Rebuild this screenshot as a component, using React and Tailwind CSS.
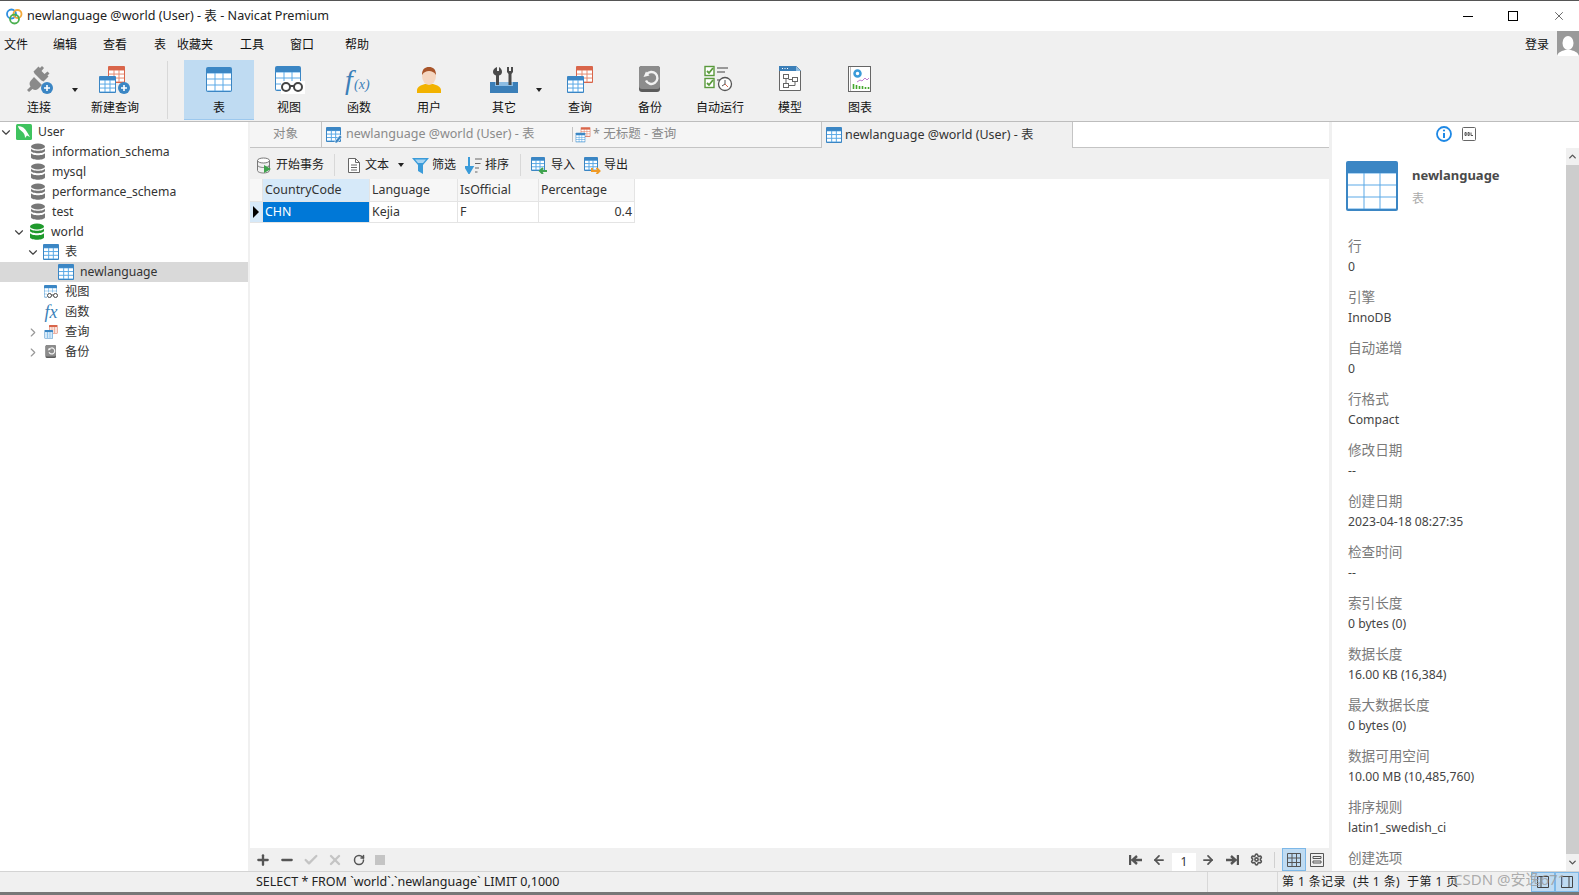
import { ArrowLeft, ArrowRight, Check, ChevronDown, ChevronRight, ChevronUp, Plus, RotateCw, Settings, Minus, X } from 'lucide-react'

const MENU = [
  { label: '文件', cls: 'ml-[4px]' },
  { label: '编辑', cls: 'ml-[25px]' },
  { label: '查看', cls: 'ml-[26px]' },
  { label: '表', cls: 'ml-[27px]' },
  { label: '收藏夹', cls: 'ml-[11px]' },
  { label: '工具', cls: 'ml-[27px]' },
  { label: '窗口', cls: 'ml-[26px]' },
  { label: '帮助', cls: 'ml-[31px]' },
]

const PROPS = [
  ['行', '0'],
  ['引擎', 'InnoDB'],
  ['自动递增', '0'],
  ['行格式', 'Compact'],
  ['修改日期', '--'],
  ['创建日期', '2023-04-18 08:27:35'],
  ['检查时间', '--'],
  ['索引长度', '0 bytes (0)'],
  ['数据长度', '16.00 KB (16,384)'],
  ['最大数据长度', '0 bytes (0)'],
  ['数据可用空间', '10.00 MB (10,485,760)'],
  ['排序规则', 'latin1_swedish_ci'],
  ['创建选项', ''],
]

// table glyph used all over the app, drawn inside a parent svg
function Grid({ x = 0, y = 0, w = 16, h = 16, color = '#3b86c4', line = '#5aa9e6', head = 0.24, cols = 3, rows = 3 }) {
  const headH = h * head
  const pad = Math.max(1, w / 26)
  const cw = (w - pad * 2) / cols
  const ch = (h - headH - pad) / rows
  const cells = []
  for (let r = 0; r < rows; r++) {
    for (let c = 0; c < cols; c++) {
      cells.push(
        <rect key={`${r}-${c}`} x={x + pad + c * cw + (c ? 0.5 : 0)} y={y + headH + r * ch + 0.5} width={cw - (c ? 0.5 : 0) - (c < cols - 1 ? 0.5 : 0)} height={ch - 1} fill="#fff" />,
      )
    }
  }
  return (
    <g>
      <rect x={x} y={y} width={w} height={h} rx={w > 20 ? 2 : 1} fill={color} />
      <rect x={x + pad} y={y + headH} width={w - pad * 2} height={h - headH - pad} fill={line} />
      {cells}
    </g>
  )
}

function TableIcon({ size = 16 }) {
  return (
    <svg width={size} height={size} viewBox="0 0 16 16">
      <Grid w={16} h={16} />
    </svg>
  )
}

function QueryIcon({ size = 32 }) {
  return (
    <svg width={size} height={size} viewBox="0 0 32 32">
      <Grid x={12} y={2} w={17} h={17} color="#d9654a" line="#e58a70" />
      <Grid x={3} y={12} w={17} h={17} />
    </svg>
  )
}

function NewQueryIcon() {
  return (
    <svg width="32" height="32" viewBox="0 0 32 32">
      <Grid x={9} y={2} w={17} h={17} color="#d9654a" line="#e58a70" />
      <Grid x={0} y={12} w={17} h={17} />
      <circle cx="25" cy="24" r="6" fill="#3b86c4" />
      <path d="M25 21v6M22 24h6" stroke="#fff" strokeWidth="1.6" />
    </svg>
  )
}

function PlugIcon() {
  return (
    <svg width="32" height="32" viewBox="0 0 32 32">
      <path d="M17 4l2-2 2 2-2.500 3 3 3 3-2.500 2 2-2 2 1 1-5 5-2-1-7-7-1-2 5-5z" fill="#8a8a8a" />
      <path d="M11 13l8 8-4 4c-2 1.500-4 1-5.500 0L6 28l-2-2 3.500-3.500c-1-1.500-1.500-3.500 0-5.500z" fill="#8a8a8a" />
      <circle cx="24" cy="24" r="6" fill="#3b86c4" />
      <path d="M24 21v6M21 24h6" stroke="#fff" strokeWidth="1.6" />
    </svg>
  )
}

function ViewIcon({ size = 32 }) {
  return (
    <svg width={size} height={size} viewBox="0 0 32 32">
      <Grid x={2} y={2} w={26} h={25} />
      <rect x="8" y="17" width="24" height="13" fill="#fff" />
      <circle cx="13" cy="23" r="4" fill="#fff" stroke="#444" strokeWidth="2" />
      <circle cx="25" cy="23" r="4" fill="#fff" stroke="#444" strokeWidth="2" />
      <path d="M17 22h4" stroke="#444" strokeWidth="2" />
    </svg>
  )
}

function FuncIcon() {
  return (
    <svg width="32" height="32" viewBox="0 0 32 32">
      <text x="2" y="25" fontFamily="'Liberation Serif', serif" fontStyle="italic" fontSize="28" fill="#3b7fb8">f</text>
      <text x="11" y="25" fontFamily="'Liberation Serif', serif" fontStyle="italic" fontSize="14" fill="#3b7fb8">(x)</text>
    </svg>
  )
}

function UserIcon() {
  return (
    <svg width="32" height="32" viewBox="0 0 32 32">
      <path d="M4 29v-3c0-3 4-5 8-6h8c4 1 8 3 8 6v3z" fill="#f2b200" />
      <ellipse cx="16" cy="12" rx="7" ry="9" fill="#f5d6c0" />
      <path d="M9 11c0-6 3-8 7-8s7 2 7 8c-2-3-4-4-7-4s-5 1-7 4z" fill="#a8552a" />
    </svg>
  )
}

function ToolsIcon() {
  return (
    <svg width="32" height="32" viewBox="0 0 32 32">
      <path d="M2 18h28v11H2z" fill="#3b7fb8" />
      <path d="M7 18h18v4H7z" fill="#8dbde3" />
      <path d="M11 3v4H9V3C6 4 5 6 5 8c0 2 1.500 3 3 3.500V21h3v-9.500c2-.5 3-2 3-3.500 0-2-1-4-3-5z" fill="#4a4a4a" />
      <path d="M19 3v5l1.500 2V21h3V10L25 8V3l-2 0v4h-2V3z" fill="#4a4a4a" />
    </svg>
  )
}

function BackupIcon({ size = 32 }) {
  return (
    <svg width={size} height={size} viewBox="0 0 32 32">
      <rect x="5" y="2" width="21" height="26" rx="3" fill="#5c5c5c" />
      <rect x="5" y="2" width="21" height="23" rx="3" fill="#8c8c8c" />
      <path d="M12.500 10.500a6 6 0 1 1 -.5 6" fill="none" stroke="#f2f2f2" strokeWidth="2.400" />
      <path d="M9.500 13l6-1.500-3.500-4z" fill="#f2f2f2" />
    </svg>
  )
}

function AutoRunIcon() {
  return (
    <svg width="32" height="32" viewBox="0 0 32 32">
      <rect x="1" y="2.500" width="9" height="9" fill="#fff" stroke="#5a9a3c" strokeWidth="1.400" />
      <path d="M3 7l2 2 4-5" stroke="#5a9a3c" strokeWidth="1.800" fill="none" />
      <rect x="1" y="14.500" width="9" height="9" fill="#fff" stroke="#5a9a3c" strokeWidth="1.400" />
      <path d="M3 19l2 2 4-5" stroke="#5a9a3c" strokeWidth="1.800" fill="none" />
      <path d="M13 4h11M13 8h8M13 16h4" stroke="#999" strokeWidth="1.800" />
      <circle cx="21" cy="20" r="6.500" fill="#fff" stroke="#555" strokeWidth="1.300" />
      <path d="M21 16v4l-3 2" stroke="#555" fill="none" />
      <path d="M21 20l3 3" stroke="#d9654a" fill="none" />
    </svg>
  )
}

function ModelIcon() {
  return (
    <svg width="32" height="32" viewBox="0 0 32 32">
      <path d="M5.500 2.500h17l4 4v20h-21z" fill="#fff" stroke="#666" />
      <path d="M5 2h17l5 5H5z" fill="#3b7fb8" />
      <path d="M22 2l5 5h-5z" fill="#8dbde3" />
      <path d="M8 4.500h1M10.500 4.500h1M13 4.500h1" stroke="#fff" />
      <g fill="#fff" stroke="#666">
        <rect x="9.500" y="10.500" width="5" height="4" />
        <rect x="18.500" y="13.500" width="5" height="4" />
        <rect x="9.500" y="19.500" width="5" height="4" />
      </g>
      <path d="M12 14.500v5M14.500 15.500h4M14.500 21.500h6.500v-4" stroke="#666" fill="none" />
    </svg>
  )
}

function ChartIcon() {
  return (
    <svg width="32" height="32" viewBox="0 0 32 32">
      <rect x="4.500" y="2.500" width="22" height="25" fill="#fff" stroke="#666" />
      <path d="M6.500 3v24" stroke="#bbb" />
      <circle cx="13.500" cy="9.500" r="3" fill="none" stroke="#3a9bd9" strokeWidth="2.500" />
      <path d="M13 18l3-2 2 1 3-3 2 2 2-2" stroke="#c07ad0" fill="none" />
      <path d="M9.500 25v-5M12.500 25v-4M15.500 25v-3M18.500 25v-3M21.500 25v-2M24.500 25v-2" stroke="#46a82f" strokeWidth="1.600" />
    </svg>
  )
}

function Caret() {
  return <span className="w-0 h-0 border-x-[3.5px] border-x-transparent border-t-[4px] border-t-[#222]" />
}

function ToolButton({ label, icon, active, className }) {
  return (
    <div className={`relative flex h-[60px] w-[70px] shrink-0 flex-col items-center ${active ? 'border-b border-[#9cc8ee] bg-[#bfdbf2]' : ''} ${className || ''}`}>
      <div className="mt-[4px] flex h-[32px] items-center justify-center">{icon}</div>
      <span className="mt-[4px] text-[12px] leading-[16px] text-[#111]">{label}</span>
    </div>
  )
}

function DbIcon({ color = '#777', size = 16 }) {
  return (
    <svg width={size} height={size + 2} viewBox="0 0 16 18">
      <ellipse cx="8" cy="3.500" rx="7" ry="3" fill={color} />
      <path d="M1 5.500c1 3 13 3 14 0v2.500c-1 3-13 3-14 0z" fill={color} />
      <path d="M1 10c1 3 13 3 14 0v4.500c-1 3-13 3-14 0z" fill={color} />
    </svg>
  )
}

function DolphinIcon() {
  return (
    <svg width="16" height="16" viewBox="0 0 16 16">
      <rect width="16" height="16" rx="1.500" fill="#3fc35f" />
      <path d="M2 2c4 0 7 2 9 6l3 5-3-1.500L9 14c0-3-1-5-3-6.500C4 6 2.500 4.500 2 2z" fill="#fff" />
    </svg>
  )
}

function TreeRow({ depth, open, icon, label, selected }) {
  return (
    <div className={`flex h-[20px] items-center ${selected ? 'bg-[#d9d9d9]' : ''}`}>
      <div className={`flex w-[14px] shrink-0 justify-center ${depth}`}>
        {open === true && <ChevronDown size={15} strokeWidth={2} className="text-[#444]" />}
        {open === false && <ChevronRight size={15} strokeWidth={2} className="text-[#999]" />}
      </div>
      <div className="ml-[3px] flex w-[16px] shrink-0 items-center justify-center">{icon}</div>
      <span className="ml-[6px] text-[12.2px] text-[#333]">{label}</span>
    </div>
  )
}

function Sidebar() {
  return (
    <div className="h-full w-[248px] shrink-0 overflow-hidden bg-white">
      <TreeRow depth="ml-[-1px]" open icon={<DolphinIcon />} label="User" />
      {['information_schema', 'mysql', 'performance_schema', 'test'].map((name) => (
        <TreeRow key={name} depth="ml-[13px]" icon={<DbIcon />} label={name} />
      ))}
      <TreeRow depth="ml-[12px]" open icon={<DbIcon color="#1f9a2c" />} label="world" />
      <TreeRow depth="ml-[26px]" open icon={<TableIcon />} label="表" />
      <TreeRow depth="ml-[41px]" icon={<TableIcon />} label="newlanguage" selected />
      <TreeRow depth="ml-[26px]" icon={<ViewIcon size={18} />} label="视图" />
      <TreeRow depth="ml-[26px]" icon={<span className="font-['Liberation_Serif'] text-[18px] italic leading-none text-[#3b7fb8]">fx</span>} label="函数" />
      <TreeRow depth="ml-[26px]" open={false} icon={<QueryIcon size={18} />} label="查询" />
      <TreeRow depth="ml-[26px]" open={false} icon={<BackupIcon size={18} />} label="备份" />
    </div>
  )
}

function Tabs() {
  return (
    <div className="flex h-[26px] shrink-0 text-[12.5px] text-[#8a8a8a]">
      <div className="flex w-[72px] items-center justify-center border-b border-r border-[#c4c4c4] bg-[#f5f5f5]">对象</div>
      <div className="flex w-[250px] items-center gap-[4px] border-b border-[#c4c4c4] bg-[#f5f5f5] pl-[4px]">
        <svg width="16" height="16" viewBox="0 0 16 16">
          <Grid w={15} h={15} />
          <path d="M9 14l5-6 2 2-5 6H9z" fill="#3b86c4" stroke="#fff" strokeWidth="0.6" />
        </svg>
        <span>newlanguage @world (User) - 表</span>
      </div>
      <div className="flex w-[250px] items-center gap-[1px] border-b border-r border-[#c4c4c4] bg-[#f5f5f5]">
        <div className="h-[15px] w-px bg-[#c4c4c4]" />
        <QueryIcon size={18} />
        <span>* 无标题 - 查询</span>
      </div>
      <div className="flex w-[250px] items-center gap-[3px] bg-[#f0f0f0] pl-[4px] text-[#333]">
        <TableIcon />
        <span>newlanguage @world (User) - 表</span>
      </div>
      <div className="flex-1 border-b border-l border-[#c4c4c4] bg-white" />
    </div>
  )
}

function GridToolbar() {
  const Item = ({ icon, label, className }) => (
    <div className={`flex items-center gap-[3px] text-[12px] text-[#222] ${className || ''}`}>
      {icon}
      <span>{label}</span>
    </div>
  )
  const Sep = () => <div className="h-[22px] w-px bg-[#d8d8d8]" />
  return (
    <div className="flex h-[31px] shrink-0 items-center bg-[#f0f0f0] pl-[6px] pt-[3px]">
      <Item
        label="开始事务"
        icon={
          <svg width="17" height="17" viewBox="0 0 17 17">
            <ellipse cx="7.500" cy="3.500" rx="6" ry="2.500" fill="#fff" stroke="#777" />
            <path d="M1.500 3.500v10c0 1.500 3 2.500 6 2.500s6-1 6-2.500v-10M1.500 8c0 1.500 3 2.500 6 2.500s6-1 6-2.500" fill="none" stroke="#777" />
            <path d="M8 8l7 4-7 4z" fill="#3fa34d" />
          </svg>
        }
      />
      <div className="ml-[10px] mr-[11px]"><Sep /></div>
      <Item
        label="文本"
        icon={
          <svg width="16" height="17" viewBox="0 0 16 17">
            <path d="M2.500 1.500h7l4 4v10h-11z" fill="#fff" stroke="#666" />
            <path d="M9.500 1.500v4h4M5 8h6M5 10.500h6M5 13h6" fill="none" stroke="#666" />
          </svg>
        }
      />
      <div className="ml-[9px] mr-[8px] flex"><Caret /></div>
      <Item
        label="筛选"
        icon={
          <svg width="17" height="17" viewBox="0 0 17 17">
            <path d="M0 1h17l-6 7v9l-5-3V8z" fill="#3a9bd9" />
            <path d="M3 2.500h11L11 6H6z" fill="#a6d4f2" />
          </svg>
        }
      />
      <Item
        className="ml-[9px]"
        label="排序"
        icon={
          <svg width="17" height="17" viewBox="0 0 17 17">
            <path d="M4 0v13M0.500 10L4 16l3.500-6z" stroke="#3a9bd9" strokeWidth="2" fill="#3a9bd9" />
            <path d="M10 2h7M10 6.500h5.500M10 11h4M10 15h2.500" stroke="#666" />
          </svg>
        }
      />
      <div className="ml-[11px] mr-[10px]"><Sep /></div>
      <Item
        label="导入"
        icon={
          <svg width="17" height="17" viewBox="0 0 17 17">
            <Grid w={14} h={14} />
            <path d="M16 14h-7M12 11l-3 3 3 3" stroke="#3fa34d" strokeWidth="2" fill="none" />
          </svg>
        }
      />
      <Item
        className="ml-[9px]"
        label="导出"
        icon={
          <svg width="17" height="17" viewBox="0 0 17 17">
            <Grid w={14} h={14} />
            <path d="M8 11v3h7M12.500 11l3 3-3 3" stroke="#ef9a26" strokeWidth="2" fill="none" />
          </svg>
        }
      />
    </div>
  )
}

function DataGrid() {
  const Head = ({ w, children, active }) => (
    <div className={`flex h-[23px] items-center border-b border-r border-[#e4e4e4] pl-[2px] ${w} ${active ? 'bg-[#d6e9f9]' : 'bg-[#f7f7f7]'}`}>{children}</div>
  )
  const Cell = ({ w, children, className }) => (
    <div className={`flex h-[21px] items-center border-b border-r border-[#e4e4e4] px-[2px] ${w} ${className || ''}`}>{children}</div>
  )
  return (
    <div className="flex-1 bg-white text-[12.4px] text-[#333]">
      <div className="flex">
        <Head w="w-[13px]" />
        <Head w="w-[107px]" active>CountryCode</Head>
        <Head w="w-[88px]">Language</Head>
        <Head w="w-[81px]">IsOfficial</Head>
        <Head w="w-[96px]">Percentage</Head>
      </div>
      <div className="flex">
        <div className="flex h-[21px] w-[13px] items-center justify-center border-b border-r border-[#e4e4e4] bg-[#d6e9f9]">
          <span className="h-0 w-0 border-y-[6px] border-l-[6px] border-y-transparent border-l-black" />
        </div>
        <Cell w="w-[107px]" className="bg-[#0078d7] text-white">CHN</Cell>
        <Cell w="w-[88px]">Kejia</Cell>
        <Cell w="w-[81px]">F</Cell>
        <Cell w="w-[96px]" className="justify-end">0.4</Cell>
      </div>
    </div>
  )
}

function GridFooter() {
  return (
    <div className="flex h-[23px] shrink-0 items-center bg-[#f0f0f0] pl-[5px]">
      <Plus size={16} strokeWidth={3.500} className="mr-[8px] text-[#555]" />
      <Minus size={16} strokeWidth={3.500} className="mr-[8px] text-[#555]" />
      <Check size={16} strokeWidth={3.500} className="mr-[8px] text-[#c4c4c4]" />
      <X size={16} strokeWidth={3.500} className="mr-[8px] text-[#c4c4c4]" />
      <RotateCw size={12} strokeWidth={3} className="ml-[2px] mr-[10px] text-[#555]" />
      <div className="h-[10px] w-[10px] bg-[#c4c4c4]" />
      <div className="flex-1" />
      <svg width="14" height="12" viewBox="0 0 14 12" className="mr-[9px]">
        <path d="M1 1v10M13 6H4M8 2L3.500 6 8 10" stroke="#555" strokeWidth="2.400" fill="none" />
      </svg>
      <ArrowLeft size={14} strokeWidth={3} className="mr-[6px] text-[#555]" />
      <div className="flex h-[18px] w-[24px] items-center justify-center self-end bg-white text-[12px] text-[#333]">1</div>
      <ArrowRight size={14} strokeWidth={3} className="ml-[5px] mr-[10px] text-[#555]" />
      <svg width="14" height="12" viewBox="0 0 14 12" className="mr-[11px]">
        <path d="M13 1v10M1 6h9M6 2l4.500 4L6 10" stroke="#555" strokeWidth="2.400" fill="none" />
      </svg>
      <Settings size={13} strokeWidth={3} className="mr-[11px] text-[#555]" />
      <div className="mr-[7px] h-[16px] w-px bg-[#d0d0d0]" />
      <div className="mr-[4px] flex h-[23px] w-[24px] items-center justify-center border border-[#7db8e8] bg-[#bfdbf2]">
        <svg width="14" height="14" viewBox="0 0 14 14">
          <path d="M.5.500h13v13H.500zM.5 5h13M.5 9.500h13M5 .500v13M9.500.500v13" fill="none" stroke="#555" />
        </svg>
      </div>
      <svg width="14" height="14" viewBox="0 0 14 14" className="mr-[5px]">
        <path d="M.5.500h13v13H.500z" fill="none" stroke="#555" />
        <path d="M3 3.500h8v2H3zM3 8h8v2H3z" fill="none" stroke="#555" />
      </svg>
    </div>
  )
}

function InfoPanel() {
  return (
    <div className="flex h-full w-[247px] shrink-0 flex-col bg-white">
      <div className="flex h-[26px] shrink-0 items-center justify-center gap-[10px] pb-[2px]">
        <svg width="16" height="16" viewBox="0 0 16 16">
          <circle cx="8" cy="8" r="7" fill="#fff" stroke="#1e88e5" strokeWidth="1.800" />
          <path d="M8 7v5" stroke="#1e88e5" strokeWidth="2" />
          <circle cx="8" cy="4.500" r="1.100" fill="#1e88e5" />
        </svg>
        <svg width="14" height="14" viewBox="0 0 14 14">
          <rect x=".5" y=".5" width="13" height="13" rx="1" fill="#fff" stroke="#666" />
          <path d="M3 5.500v3h1.200v-3zM6 5.500v3h1.200v-3zM9 5.500v3h2" fill="none" stroke="#555" />
        </svg>
      </div>
      <div className="flex min-h-0 flex-1">
        <div className="min-w-0 flex-1 overflow-hidden pl-[14px]">
          <div className="flex">
            <svg width="52" height="50" viewBox="0 0 52 50" className="mt-[13px]">
              <Grid w={52} h={50} />
            </svg>
            <div className="ml-[14px] mt-[18px]">
              <div className="text-[13px] font-bold leading-[18px] text-[#4a4a4a]">newlanguage</div>
              <div className="mt-[6px] text-[12px] leading-[18px] text-[#aaa]">表</div>
            </div>
          </div>
          <div className="mt-[25px] pl-[2px]">
            {PROPS.map(([k, v]) => (
              <div key={k} className="h-[51px]">
                <div className="h-[20px] text-[13.6px] leading-[20px] text-[#7a7a7a]">{k}</div>
                <div className="mt-px h-[20px] text-[12.2px] leading-[20px] text-[#444]">{v}</div>
              </div>
            ))}
          </div>
        </div>
        <div className="flex w-[13px] shrink-0 flex-col bg-[#cdcdcd]">
          <div className="flex h-[17px] items-center justify-center bg-[#f0f0f0]">
            <ChevronUp size={11} strokeWidth={3} className="text-[#555]" />
          </div>
          <div className="flex-1" />
          <div className="flex h-[17px] items-center justify-center bg-[#f0f0f0]">
            <ChevronDown size={11} strokeWidth={3} className="text-[#555]" />
          </div>
        </div>
      </div>
    </div>
  )
}

export default function App() {
  return (
    <div className="relative flex h-[895px] w-[1579px] flex-col overflow-hidden bg-[#f0f0f0] font-['Noto_Sans','Noto_Sans_CJK_SC',sans-serif]">
      <div className="h-px shrink-0 bg-[#555]" />

      {/* title bar */}
      <div className="flex h-[30px] shrink-0 items-center bg-white pl-[6px]">
        <svg width="17" height="17" viewBox="0 0 17 17">
          <circle cx="5.500" cy="6" r="4.500" fill="none" stroke="#2f8fe0" strokeWidth="1.800" />
          <circle cx="11.500" cy="6" r="4" fill="none" stroke="#f2a93b" strokeWidth="1.800" />
          <circle cx="8.500" cy="11" r="4.500" fill="none" stroke="#4cb050" strokeWidth="1.800" />
        </svg>
        <span className="ml-[4px] text-[12.6px] text-[#222]">newlanguage @world (User) - 表 - Navicat Premium</span>
        <div className="flex-1" />
        <div className="mr-[35px] h-px w-[10px] bg-black" />
        <div className="mr-[34px] h-[10px] w-[10px] border border-black" />
        <X size={14} strokeWidth={1} className="mr-[13px] text-black" />
      </div>

      {/* menu */}
      <div className="flex h-[29px] shrink-0 items-center pb-[2px] text-[12px] text-[#111]">
        {MENU.map((m) => (
          <span key={m.label} className={m.cls}>{m.label}</span>
        ))}
        <div className="flex-1" />
        <span className="mr-[8px]">登录</span>
        <div className="flex h-[25px] w-[22px] items-end justify-center self-start overflow-hidden bg-[#9a9a9a]">
          <svg width="22" height="22" viewBox="0 0 22 22">
            <ellipse cx="11" cy="9" rx="5.500" ry="7" fill="#fff" />
            <path d="M0 22c1-4 5-5 8-6h6c3 1 7 2 8 6z" fill="#fff" />
          </svg>
        </div>
      </div>

      {/* ribbon */}
      <div className="flex h-[62px] shrink-0 border-b border-[#bdbdbd]">
        <div className="relative w-[78px]">
          <ToolButton label="连接" icon={<PlugIcon />} className="ml-[4px]" />
          <div className="absolute left-[72px] top-[28px] flex"><Caret /></div>
        </div>
        <ToolButton label="新建查询" icon={<NewQueryIcon />} className="ml-[2px]" />
        <div className="ml-[17px] mr-[16px] mt-[1px] h-[58px] w-px bg-[#d8d8d8]" />
        <ToolButton label="表" active icon={<svg width="32" height="32" viewBox="0 0 32 32"><Grid x={3} y={3} w={26} h={25} /></svg>} />
        <ToolButton label="视图" icon={<ViewIcon />} />
        <ToolButton label="函数" icon={<FuncIcon />} />
        <ToolButton label="用户" icon={<UserIcon />} />
        <div className="relative w-[80px]">
          <ToolButton label="其它" icon={<ToolsIcon />} className="ml-[5px]" />
          <div className="absolute left-[72px] top-[28px] flex"><Caret /></div>
        </div>
        <ToolButton label="查询" icon={<QueryIcon />} className="ml-[1px]" />
        <ToolButton label="备份" icon={<BackupIcon />} />
        <ToolButton label="自动运行" icon={<AutoRunIcon />} />
        <ToolButton label="模型" icon={<ModelIcon />} />
        <ToolButton label="图表" icon={<ChartIcon />} />
      </div>

      {/* body */}
      <div className="flex min-h-0 flex-1">
        <Sidebar />
        <div className="ml-[2px] flex h-full w-[1079px] shrink-0 flex-col">
          <Tabs />
          <GridToolbar />
          <DataGrid />
          <GridFooter />
        </div>
        <div className="w-[3px] shrink-0" />
        <InfoPanel />
      </div>

      {/* status bar */}
      <div className="flex h-[21px] shrink-0 items-center border-t border-[#d4d4d4] text-[12.5px] text-[#222]">
        <div className="w-[250px] shrink-0" />
        <span className="ml-[6px] w-[951px] shrink-0">SELECT * FROM `world`.`newlanguage` LIMIT 0,1000</span>
        <div className="h-full w-px bg-[#d8d8d8]" />
        <div className="w-[69px] shrink-0" />
        <div className="h-full w-px bg-[#d8d8d8]" />
        <span className="ml-[4px] whitespace-pre text-[12px] tracking-[0.4px]">第 1 条记录  (共 1 条)  于第 1 页</span>
        <div className="flex-1" />
        <div className="flex h-full w-[24px] items-center justify-center border border-[#7db8e8] bg-[#bfdbf2]">
          <svg width="12" height="12" viewBox="0 0 12 12"><path d="M.5.500h11v11H.500zM4 .500v11" fill="none" stroke="#444" /></svg>
        </div>
        <div className="flex h-full w-[24px] items-center justify-center border border-[#7db8e8] bg-[#bfdbf2]">
          <svg width="12" height="12" viewBox="0 0 12 12"><path d="M.5.500h11v11H.500zM8 .500v11" fill="none" stroke="#444" /></svg>
        </div>
      </div>
      <div className="h-[3px] shrink-0 bg-[#777]" />

      {/* csdn watermark */}
      <div className="absolute left-[1453px] top-[868px] text-[15px] text-[#9a9a9a]/80">CSDN @安逸671</div>
    </div>
  )
}
